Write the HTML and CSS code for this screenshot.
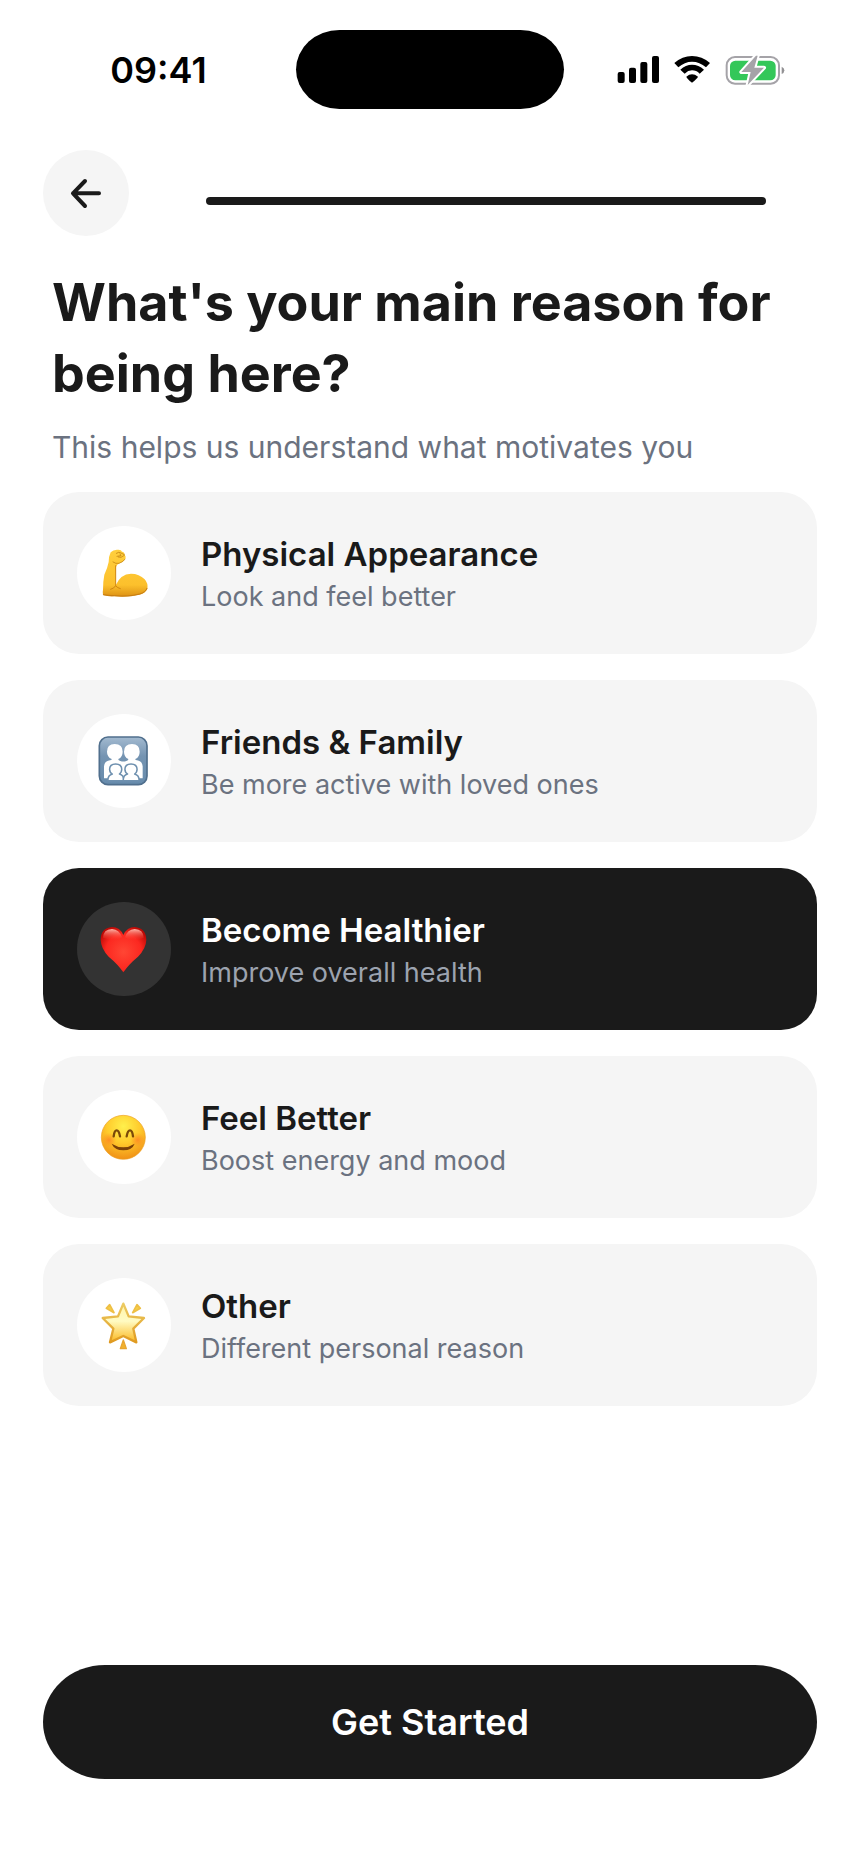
FILE: index.html
```
<!DOCTYPE html>
<html lang="en">
<head>
    <meta charset="UTF-8">
    <meta name="viewport" content="width=device-width, initial-scale=1.0">
    <title>What's your main reason for being here?</title>
    <link rel="stylesheet" href="styles.css">
</head>
<body>
    <div class="screen">
        <div class="status-bar">
            <span class="time">09:41</span>
            <div class="island"></div>
            <div class="status-icons">
                <svg width="43" height="29" viewBox="559 165 129 87" aria-hidden="true">
                    <rect x="561" y="216" width="21" height="33" rx="6"/>
                    <rect x="595" y="203" width="21" height="46" rx="6"/>
                    <rect x="629" y="186" width="21" height="63" rx="6"/>
                    <rect x="664" y="168" width="21" height="81" rx="6"/>
                </svg>
                <svg width="37" height="29" viewBox="732 165 111 87" aria-hidden="true">
                    <path d="M733 189Q757 168 786 168Q816 168 840 189L828 202Q809 185 786 185Q764 185 745 202Z"/>
                    <path d="M751 209Q767 194 786 194Q806 194 822 209L809 221Q799 211 786 211Q774 211 764 221Z"/>
                    <path d="M769 230Q786 216 804 230Q801 236 786 248Q771 236 769 230Z"/>
                </svg>
                <svg width="61" height="30" viewBox="885 162 183 90" aria-hidden="true">
                    <rect x="890" y="168" width="157" height="80" rx="25" fill="none" stroke="#a5a3a8" stroke-width="6"/>
                    <path d="M1055 197Q1063 200 1063 208Q1063 216 1055 219Z" fill="#929194"/>
                    <rect x="900" y="179" width="137" height="59" rx="16" fill="#34c759"/>
                    <path d="M978 164L934 213H962L953 252L1002 200H973L983 164Z" fill="#a5a3a8" stroke="#fff" stroke-width="12" stroke-linejoin="round" paint-order="stroke"/>
                </svg>
            </div>
        </div>

        <header class="top-nav">
            <button type="button" class="back" aria-label="Back">
                <svg viewBox="128 448 258 258" aria-hidden="true">
                    <path d="M296 578H218M254 541L218 578L254 616" fill="none" stroke="#1a1a1a" stroke-width="12" stroke-linecap="round" stroke-linejoin="round"/>
                </svg>
            </button>
            <div class="progress" role="progressbar" aria-label="Progress" aria-valuenow="100"></div>
        </header>

        <main class="content">
            <h1>What's your main reason for being here?</h1>
            <p class="subtitle">This helps us understand what motivates you</p>

            <form id="reasonForm" class="options">
                <label class="option">
                    <input type="radio" name="reason" value="appearance">
                    <span class="icon">
                        <svg viewBox="52 46 282 282" aria-hidden="true">
                            <defs>
                                <linearGradient id="skin" x1="0" y1="0" x2="0" y2="1">
                                    <stop offset="0" stop-color="#ffcf3d"/>
                                    <stop offset="0.75" stop-color="#fcc02c"/>
                                    <stop offset="1" stop-color="#dc9013"/>
                                </linearGradient>
                            </defs>
                            <path d="M153 125Q161 116 174 117Q185 116 187 123Q195 124 195 132Q200 137 197 145Q191 154 180 158Q171 162 169 169Q167 197 168 224Q182 190 214 189Q239 189 255 206Q266 218 263 235Q258 247 240 252Q205 261 164 257Q144 258 132 254Q128 250 130 237Q130 212 134 192Q143 174 147 154Q147 137 153 125Z" fill="url(#skin)"/>
                            <path d="M168 165L168 225Q164 233 153 236M168 226Q174 232 182 234" fill="none" stroke="#cf850f" stroke-width="3" stroke-linecap="round"/>
                            <path d="M170 128Q178 122 184 127L194 132M172 137L184 135L181 130M194 134L184 140L176 139M196 146Q188 155 178 158Q168 160 160 154" fill="none" stroke="#b87509" stroke-width="2" stroke-linecap="round" stroke-linejoin="round"/>
                            <path d="M131 252Q148 255 164 255Q205 259 240 250Q258 245 262 233" fill="none" stroke="#c77d12" stroke-width="3" stroke-linecap="round"/>
                        </svg>
                    </span>
                    <span class="text">
                        <span class="name">Physical Appearance</span>
                        <span class="desc">Look and feel better</span>
                    </span>
                </label>

                <label class="option">
                    <input type="radio" name="reason" value="family">
                    <span class="icon">
                        <svg viewBox="52 42 282 282" aria-hidden="true">
                            <defs>
                                <linearGradient id="tile" x1="0" y1="0" x2="0" y2="1">
                                    <stop offset="0" stop-color="#a3bad0"/>
                                    <stop offset="0.4" stop-color="#7594b2"/>
                                    <stop offset="1" stop-color="#668bac"/>
                                </linearGradient>
                            </defs>
                            <rect x="119" y="111" width="143" height="143" rx="26" fill="url(#tile)" stroke="#506f8d" stroke-width="5"/>
                            <g fill="#fff">
                                <path d="M133 235V199Q134 184 151 181Q157 180 156 177Q142 171 142 155Q142 132 165 132Q189 132 189 155Q189 171 176 177Q175 181 182 183Q191 186 200 183Q207 181 206 177Q193 171 193 155Q193 132 217 132Q240 132 240 155Q240 171 227 177Q226 180 232 181Q248 184 249 199V235Z"/>
                                <g stroke="#6e90af" stroke-width="9" paint-order="stroke">
                                    <path d="M147 240Q147 227 159 224Q161 223 160 221Q152 217 152 208Q152 194 168 194Q184 194 184 208Q184 217 177 221Q176 223 179 224Q190 227 190 240Z"/>
                                    <path d="M193 240Q193 227 204 224Q207 223 206 221Q198 217 198 208Q198 194 214 194Q230 194 230 208Q230 217 223 221Q222 223 224 224Q236 227 236 240Z"/>
                                </g>
                            </g>
                        </svg>
                    </span>
                    <span class="text">
                        <span class="name">Friends &amp; Family</span>
                        <span class="desc">Be more active with loved ones</span>
                    </span>
                </label>

                <label class="option">
                    <input type="radio" name="reason" value="health" checked>
                    <span class="icon">
                        <svg viewBox="52 50 282 282" aria-hidden="true">
                            <defs>
                                <radialGradient id="heart" cx="0.5" cy="0.55" r="0.6">
                                    <stop offset="0" stop-color="#ff4634"/>
                                    <stop offset="0.65" stop-color="#fc2820"/>
                                    <stop offset="1" stop-color="#bd0905"/>
                                </radialGradient>
                                <linearGradient id="shine" x1="0" y1="0" x2="0" y2="1">
                                    <stop offset="0" stop-color="#ffb9ac"/>
                                    <stop offset="1" stop-color="#ff4435" stop-opacity="0"/>
                                </linearGradient>
                            </defs>
                            <path d="M191 149Q181 125 157 125Q123 128 123 164Q124 190 147 214Q175 237 191 261Q207 237 235 214Q259 190 260 164Q259 128 225 125Q202 125 191 149Z" fill="url(#heart)"/>
                            <path d="M130 157Q131 132 157 131Q179 132 187 156Q173 166 157 163Q142 161 130 157ZM196 156Q203 132 225 131Q251 132 252 157Q240 164 225 164Q208 165 196 156Z" fill="url(#shine)"/>
                        </svg>
                    </span>
                    <span class="text">
                        <span class="name">Become Healthier</span>
                        <span class="desc">Improve overall health</span>
                    </span>
                </label>

                <label class="option">
                    <input type="radio" name="reason" value="mood">
                    <span class="icon">
                        <svg viewBox="52 44 282 282" aria-hidden="true">
                            <defs>
                                <radialGradient id="face" cx="0.5" cy="0.25" r="0.75">
                                    <stop offset="0" stop-color="#fff04c"/>
                                    <stop offset="0.5" stop-color="#ffcb2c"/>
                                    <stop offset="1" stop-color="#f09016"/>
                                </radialGradient>
                                <radialGradient id="cheek">
                                    <stop offset="0" stop-color="#ff7e24" stop-opacity="0.75"/>
                                    <stop offset="1" stop-color="#ff8c20" stop-opacity="0"/>
                                </radialGradient>
                            </defs>
                            <circle cx="191" cy="186" r="66" fill="url(#face)" stroke="#eda225" stroke-width="2"/>
                            <circle cx="148" cy="194" r="22" fill="url(#cheek)"/>
                            <circle cx="234" cy="194" r="22" fill="url(#cheek)"/>
                            <path d="M162 183Q164 165 171 165Q178 165 181 183M201 183Q204 165 211 165Q218 165 220 183" fill="none" stroke="#7b4a09" stroke-width="7" stroke-linecap="round"/>
                            <path d="M156 205Q191 227 225 205Q218 224 191 225Q164 224 156 205Z" fill="#7b4107"/>
                        </svg>
                    </span>
                    <span class="text">
                        <span class="name">Feel Better</span>
                        <span class="desc">Boost energy and mood</span>
                    </span>
                </label>

                <label class="option">
                    <input type="radio" name="reason" value="other">
                    <span class="icon">
                        <svg viewBox="52 53 282 282" aria-hidden="true">
                            <defs>
                                <linearGradient id="starEdge" x1="0" y1="0" x2="0" y2="1">
                                    <stop offset="0" stop-color="#eccb62"/>
                                    <stop offset="1" stop-color="#e09a20"/>
                                </linearGradient>
                                <linearGradient id="starFill" x1="0" y1="0" x2="0" y2="1">
                                    <stop offset="0" stop-color="#fff3a8"/>
                                    <stop offset="0.45" stop-color="#fffbc3"/>
                                    <stop offset="1" stop-color="#fbb81f"/>
                                </linearGradient>
                            </defs>
                            <path d="M191 130L207 168L253 173L221 205L230 246L191 227L151 246L161 205L129 173L175 168Z" fill="url(#starFill)" stroke="url(#starEdge)" stroke-width="7" stroke-linejoin="round"/>
                            <path d="M150 133L140 144L163 157Z" fill="#f6cf46" stroke="#eebf45" stroke-width="5" stroke-linejoin="round"/>
                            <path d="M232 133L242 144L219 157Z" fill="#f6cf46" stroke="#eebf45" stroke-width="5" stroke-linejoin="round"/>
                            <path d="M191 239L182 265H200Z" fill="#f1b22d" stroke="#e8a531" stroke-width="4" stroke-linejoin="round"/>
                        </svg>
                    </span>
                    <span class="text">
                        <span class="name">Other</span>
                        <span class="desc">Different personal reason</span>
                    </span>
                </label>
            </form>
        </main>

        <footer class="footer">
            <button type="submit" form="reasonForm" class="submit">Get Started</button>
        </footer>
    </div>
</body>
</html>
```
FILE: styles.css
```
* {
    box-sizing: border-box;
}
body {
    margin: 0;
    font-family: Inter, "Liberation Sans", sans-serif;
    background-color: #fff;
    color: #1a1a1a;
}
.screen {
    display: flex;
    flex-direction: column;
    min-height: 100vh;
}

/* status bar */
.status-bar {
    display: grid;
    grid-template-columns: 1fr 268px 1fr;
    place-items: center;
    padding: 30px 21px 0;
}
.time {
    font-size: 36px;
    font-weight: 600;
    color: #000;
}
.island {
    width: 100%;
    height: 79px;
    border-radius: 44px / 40px;
    background-color: #000;
}
.status-icons {
    display: flex;
    align-items: center;
    gap: 14px;
}

/* back button and progress */
.top-nav {
    display: flex;
    align-items: center;
    gap: 77px;
    padding: 41px 94px 0 43px;
}
.back {
    width: 86px;
    height: 86px;
    flex: none;
    padding: 0;
    border: none;
    border-radius: 50%;
    background-color: #f5f5f5;
    cursor: pointer;
}
.back svg {
    display: block;
}
.progress {
    flex: 1;
    height: 8px;
    margin-top: 16px;
    border-radius: 4px;
    background-color: #1a1a1a;
}

.content {
    padding: 31px 43px 0;
}
h1 {
    margin: 0;
    padding: 0 9px;
    font-size: 52px;
    line-height: 71px;
    font-weight: 700;
}
.subtitle {
    margin: 18px 0 25px;
    padding: 0 9px;
    font-size: 30px;
    line-height: 40px;
    color: #6b7280;
}

/* options */
.options {
    display: flex;
    flex-direction: column;
    gap: 26px;
}
.option {
    position: relative;
    display: flex;
    align-items: center;
    gap: 30px;
    padding: 34px;
    border-radius: 36px;
    background-color: #f5f5f5;
    cursor: pointer;
}
.option input {
    position: absolute;
    opacity: 0;
}
.icon {
    width: 94px;
    height: 94px;
    flex: none;
    border-radius: 50%;
    background-color: #fff;
}
.icon svg {
    display: block;
}
.text {
    display: flex;
    flex-direction: column;
    gap: 2px;
    padding-top: 2px;
}
.name {
    font-size: 33px;
    line-height: 44px;
    font-weight: 600;
}
.desc {
    font-size: 27px;
    line-height: 38px;
    color: #6b7280;
}
.option:has(input:checked) {
    background-color: #1a1a1a;
    color: #fff;
}
.option:has(input:checked) .icon {
    background-color: #333;
}
.option:has(input:checked) .desc {
    color: #9ca3af;
}

.footer {
    margin-top: auto;
    padding: 40px 43px 90px;
}
.submit {
    width: 100%;
    height: 114px;
    border: none;
    border-radius: 62px / 57px;
    background-color: #1a1a1a;
    color: #fff;
    font-family: inherit;
    font-size: 36px;
    font-weight: 600;
    cursor: pointer;
}
```
